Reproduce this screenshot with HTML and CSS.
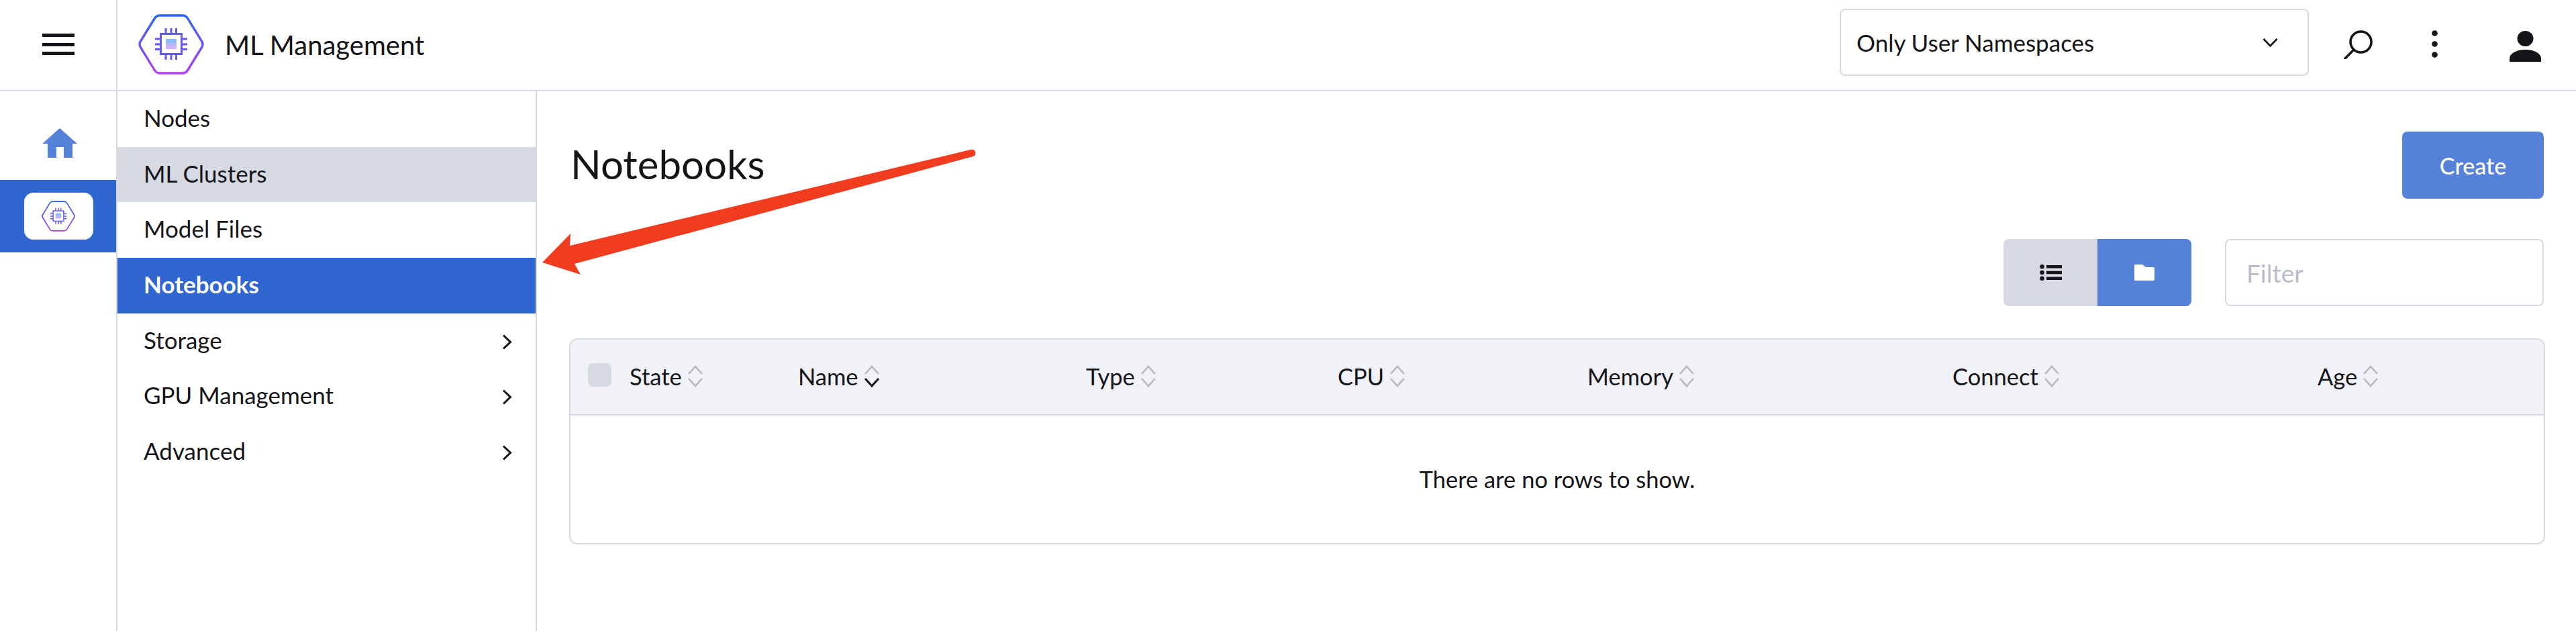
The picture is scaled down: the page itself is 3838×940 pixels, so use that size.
FILE: index.html
```html
<!DOCTYPE html>
<html lang="en">
<head>
    <meta charset="UTF-8">
    <meta name="viewport" content="width=device-width, initial-scale=1.0">
    <title>ML Management - Notebooks</title>
    <link rel="stylesheet" href="styles.css">
</head>
<body>
    <header class="topbar">
        <div class="menu-cell">
            <svg class="menu-icon" viewBox="0 0 48 32"><path d="M0 0h48v5H0zM0 14h48v5H0zM0 27h48v5H0z"/></svg>
        </div>
        <div class="brand">
            <svg class="logo" viewBox="0 0 98 90">
                <defs>
                    <linearGradient id="hexGrad" x1="0" y1="0" x2="0" y2="90" gradientUnits="userSpaceOnUse">
                        <stop offset="0" stop-color="#2369f0"/>
                        <stop offset="1" stop-color="#b83bf0"/>
                    </linearGradient>
                    <linearGradient id="coreGrad" x1="0" y1="37" x2="0" y2="52" gradientUnits="userSpaceOnUse">
                        <stop offset="0" stop-color="#76c2f8"/>
                        <stop offset="1" stop-color="#e2aef8"/>
                    </linearGradient>
                    <symbol id="chipLogo" viewBox="0 0 98 90">
                        <path d="M32 2H66Q71 2 74 7L95 41Q97 45 95 49L74 83Q71 88 66 88H32Q27 88 24 83L3 49Q1 45 3 41L24 7Q27 2 32 2Z" fill="none" stroke="url(#hexGrad)" stroke-width="3.4"/>
                        <rect x="33.5" y="29.5" width="31" height="30" fill="#fff" stroke="#6459f5" stroke-width="3"/>
                        <rect x="41" y="37" width="16" height="15" fill="url(#coreGrad)"/>
                        <path d="M41 21v7M49 21v7M56.500 21v7M41 61v7M49 61v7M56.500 61v7M25 37h7M25 45h7M25 52.500h7M66 37h7M66 45h7M66 52.500h7" fill="none" stroke="#6459f5" stroke-width="3"/>
                    </symbol>
                </defs>
                <use href="#chipLogo"/>
            </svg>
            <span class="brand-name">ML Management</span>
        </div>
        <div class="ns-select">
            <span>Only User Namespaces</span>
            <svg class="ns-chevron" viewBox="0 0 23 13"><path d="M1.500 1l10 10.500L21.500 1" fill="none" stroke="#141419" stroke-width="2.600"/></svg>
        </div>
        <svg class="search-icon" viewBox="0 0 43 43"><circle cx="25.500" cy="17.500" r="15.500" fill="none" stroke="#141419" stroke-width="3.600"/><path d="M15 29L2 42" stroke="#141419" stroke-width="3.600" stroke-linecap="round"/></svg>
        <svg class="dots-icon" viewBox="0 0 9 41"><circle cx="4.500" cy="4.500" r="4.300"/><circle cx="4.500" cy="20.500" r="4.300"/><circle cx="4.500" cy="36.500" r="4.300"/></svg>
        <svg class="user-icon" viewBox="0 0 47 46"><ellipse cx="23.500" cy="11.500" rx="12" ry="11.500"/><path d="M0 46V41C0 34 10 28 23.500 28S47 34 47 41V46Z"/></svg>
    </header>

    <div class="layout">
        <aside class="rail">
            <div class="rail-home">
                <svg class="home-icon" viewBox="0 0 52 44"><path d="M26 0L52 23H45V44H32V28H21V44H8V23H0Z"/></svg>
            </div>
            <div class="rail-active">
                <div class="rail-chip">
                    <svg class="logo-small" viewBox="0 0 98 90"><use href="#chipLogo"/></svg>
                </div>
            </div>
        </aside>

        <nav class="sidenav">
            <a class="nav-item">Nodes</a>
            <a class="nav-item nav-hover">ML Clusters</a>
            <a class="nav-item">Model Files</a>
            <a class="nav-item nav-active">Notebooks</a>
            <a class="nav-item">Storage
                <svg class="nav-chevron" viewBox="0 0 15 23"><path d="M2 1.500l10.500 10L2 21.500" fill="none" stroke="#141419" stroke-width="3"/></svg>
            </a>
            <a class="nav-item">GPU Management
                <svg class="nav-chevron" viewBox="0 0 15 23"><path d="M2 1.500l10.500 10L2 21.500" fill="none" stroke="#141419" stroke-width="3"/></svg>
            </a>
            <a class="nav-item">Advanced
                <svg class="nav-chevron" viewBox="0 0 15 23"><path d="M2 1.500l10.500 10L2 21.500" fill="none" stroke="#141419" stroke-width="3"/></svg>
            </a>
        </nav>

        <main class="content">
            <div class="title-row">
                <h1>Notebooks</h1>
                <button class="create-btn">Create</button>
            </div>

            <div class="toolbar">
                <div class="view-toggle">
                    <button class="toggle-btn">
                        <svg class="list-icon" viewBox="0 0 33 24"><circle cx="3.500" cy="3.300" r="3.300"/><circle cx="3.500" cy="12" r="3.300"/><circle cx="3.500" cy="20.700" r="3.300"/><path d="M10 1h23v4.500H10zM10 9.700h23v4.500H10zM10 18.500h23V23H10z"/></svg>
                    </button>
                    <button class="toggle-btn toggle-on">
                        <svg class="folder-icon" viewBox="0 0 30 24"><path d="M1.500 0H12L17 4H28.500A1.500 1.500 0 0 1 30 5.500V22.500A1.500 1.500 0 0 1 28.500 24H1.500A1.500 1.500 0 0 1 0 22.500V1.500A1.500 1.500 0 0 1 1.500 0Z"/></svg>
                    </button>
                </div>
                <input class="filter" type="text" placeholder="Filter">
            </div>

            <div class="table">
                <div class="table-head">
                    <span class="check"></span>
                    <span class="col">State <svg class="sort" viewBox="0 0 24 33"><path class="sort-up" d="M2 13L12 2L22 13"/><path class="sort-down" d="M2 20L12 31L22 20"/></svg></span>
                    <span class="col">Name <svg class="sort" viewBox="0 0 24 33"><path class="sort-up" d="M2 13L12 2L22 13"/><path class="sort-down sort-current" d="M2 20L12 31L22 20"/></svg></span>
                    <span class="col">Type <svg class="sort" viewBox="0 0 24 33"><path class="sort-up" d="M2 13L12 2L22 13"/><path class="sort-down" d="M2 20L12 31L22 20"/></svg></span>
                    <span class="col">CPU <svg class="sort" viewBox="0 0 24 33"><path class="sort-up" d="M2 13L12 2L22 13"/><path class="sort-down" d="M2 20L12 31L22 20"/></svg></span>
                    <span class="col">Memory <svg class="sort" viewBox="0 0 24 33"><path class="sort-up" d="M2 13L12 2L22 13"/><path class="sort-down" d="M2 20L12 31L22 20"/></svg></span>
                    <span class="col">Connect <svg class="sort" viewBox="0 0 24 33"><path class="sort-up" d="M2 13L12 2L22 13"/><path class="sort-down" d="M2 20L12 31L22 20"/></svg></span>
                    <span class="col">Age <svg class="sort" viewBox="0 0 24 33"><path class="sort-up" d="M2 13L12 2L22 13"/><path class="sort-down" d="M2 20L12 31L22 20"/></svg></span>
                </div>
                <div class="table-empty">There are no rows to show.</div>
            </div>
        </main>
    </div>

    <!-- red annotation arrow drawn on top of the screenshot -->
    <svg class="arrow" viewBox="0 0 660 200">
        <path d="M0 173L42 130L41 148L638 5Q645 4 645.500 10Q645 14 642 15L48 175L57 191Z" fill="#f23c1f"/>
    </svg>
</body>
</html>
```

FILE: styles.css
```css
body {
    margin: 0;
    height: 940px;
    overflow: hidden;
    background-color: #fff;
    color: #141419;
    font-family: Lato, "Open Sans", sans-serif;
    font-size: 35px;
    position: relative;
}
svg {
    display: block;
    flex-shrink: 0;
}

/* top bar */
.topbar {
    display: flex;
    align-items: center;
    height: 134px;
    border-bottom: 2px solid #d7d9e3;
}
.menu-cell {
    width: 173px;
    height: 134px;
    border-right: 2px solid #d7d9e3;
    display: flex;
    align-items: center;
    justify-content: center;
}
.menu-icon {
    width: 48px;
    height: 32px;
    fill: #141419;
    margin-top: -2px;
}
.brand {
    display: flex;
    align-items: center;
    gap: 31px;
    padding-left: 31px;
}
.logo {
    width: 98px;
    height: 90px;
    margin-top: -2px;
}
.brand-name {
    font-size: 40px;
}
.ns-select {
    margin-left: auto;
    align-self: flex-start;
    margin-top: 13px;
    width: 699px;
    height: 100px;
    box-sizing: border-box;
    border: 2px solid #d7d9e3;
    border-radius: 8px;
    display: flex;
    align-items: center;
    justify-content: space-between;
    padding: 0 44px 0 23px;
}
.ns-chevron {
    width: 23px;
    height: 13px;
}
.search-icon {
    width: 43px;
    height: 43px;
    margin-left: 52px;
    margin-top: -1px;
}
.dots-icon {
    width: 9px;
    height: 41px;
    margin-left: 88px;
    margin-top: -3px;
    fill: #141419;
}
.user-icon {
    width: 47px;
    height: 46px;
    margin-left: 107px;
    margin-right: 52px;
    margin-top: 4px;
    fill: #141419;
}

/* columns under the top bar */
.layout {
    display: flex;
    height: 804px;
}
.rail {
    width: 173px;
    border-right: 2px solid #d7d9e3;
    flex-shrink: 0;
}
.rail-home {
    height: 132px;
    box-sizing: border-box;
    padding: 55px 0 0 4px;
    display: flex;
    justify-content: center;
}
.home-icon {
    width: 52px;
    height: 44px;
    fill: #5681d8;
}
.rail-active {
    height: 108px;
    background-color: #3066cf;
    display: flex;
    align-items: center;
    justify-content: center;
}
.rail-chip {
    width: 103px;
    height: 70px;
    margin-left: 1px;
    background: #fff;
    border-radius: 14px;
    box-shadow: inset 0 -1px 2px #dfe1e8;
    display: flex;
    align-items: center;
    justify-content: center;
}
.logo-small {
    width: 50px;
    height: 46px;
}

.sidenav {
    width: 623px;
    border-right: 2px solid #d7d9e3;
    flex-shrink: 0;
}
.nav-item {
    height: 82.7px;
    box-sizing: border-box;
    padding: 0 35px 5px 39px;
    display: flex;
    align-items: center;
    justify-content: space-between;
}
.nav-hover {
    background-color: #d7d9e3;
}
.nav-active {
    background-color: #3066cf;
    color: #fff;
    font-weight: 700;
}
.nav-chevron {
    width: 15px;
    height: 23px;
    margin-top: 7px;
}

/* main panel */
.content {
    flex: 1;
    padding: 60px 48px 0 48px;
}
.title-row {
    display: flex;
    align-items: center;
    justify-content: space-between;
}
h1 {
    margin: 0 0 4px 2px;
    font-size: 60px;
    font-weight: 400;
    line-height: 96px;
}
.create-btn {
    width: 211px;
    height: 100px;
    background-color: #5681d8;
    color: white;
    border: none;
    border-radius: 8px;
    font-family: inherit;
    font-size: 34px;
    font-weight: 500;
}
.toolbar {
    display: flex;
    justify-content: flex-end;
    gap: 50px;
    margin-top: 60px;
}
.view-toggle {
    display: flex;
    border-radius: 8px;
    overflow: hidden;
}
.toggle-btn {
    width: 140px;
    height: 100px;
    border: none;
    padding: 0;
    background-color: #d7d9e3;
    display: flex;
    align-items: center;
    justify-content: center;
}
.toggle-on {
    background-color: #5681d8;
}
.list-icon {
    width: 33px;
    height: 24px;
    fill: #141419;
}
.folder-icon {
    width: 30px;
    height: 24px;
    fill: #fff;
}
.filter {
    width: 475px;
    height: 100px;
    box-sizing: border-box;
    border: 2px solid #d7d9e3;
    border-radius: 8px;
    padding: 0 30px;
    font-family: inherit;
    font-size: 37px;
}
.filter::placeholder {
    color: #b9bccb;
    opacity: 1;
}

/* table */
.table {
    margin-top: 48px;
    margin-right: -2px;
    border: 2px solid #d7d9e3;
    border-radius: 12px;
    overflow: hidden;
    font-size: 34.500px;
}
.table-head {
    display: grid;
    grid-template-columns: 62px 251px 429px 375px 372px 544px 544px 1fr;
    align-items: center;
    height: 111px;
    padding-left: 26px;
    background-color: #f1f2f7;
    border-bottom: 2px solid #d7d9e3;
}
.check {
    width: 35px;
    height: 35px;
    background-color: #d7d9e3;
    border-radius: 8px;
    margin-top: -7px;
}
.col {
    display: flex;
    align-items: center;
    gap: 8px;
    margin-top: -2px;
}
.sort {
    width: 24px;
    height: 33px;
    fill: none;
}
.sort-up, .sort-down {
    stroke: #b7b9be;
    stroke-width: 2.600;
}
.sort-current {
    stroke: #141419;
    stroke-width: 3;
}
.table-empty {
    height: 188px;
    padding-bottom: 2px;
    display: flex;
    align-items: center;
    justify-content: center;
}

/* annotation */
.arrow {
    position: absolute;
    left: 808px;
    top: 218px;
    width: 660px;
    height: 200px;
}
```
